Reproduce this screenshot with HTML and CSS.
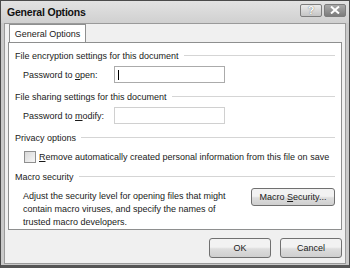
FILE: index.html
```html
<!DOCTYPE html>
<html>

<head>
  <title>General Options</title>
  <link rel="stylesheet" href="styles.css">
</head>

<body>
  <div class="window">
    <div class="titlebar">
      <span class="title">General Options</span>
      <div class="caption-buttons">
        <span class="cap-btn help">?</span>
        <span class="cap-btn close">
          <svg width="10" height="8" viewBox="0 0 10 8">
            <path d="M1 0.5 L9 7.5 M9 0.5 L1 7.5" stroke="#fff" stroke-width="2"/>
          </svg>
        </span>
      </div>
    </div>

    <div class="client">
      <!-- tab strip -->
      <div class="tabs">
        <span class="tab">General Options</span>
      </div>

      <div class="panel">
        <div class="group-title"><span>File encryption settings for this document</span></div>
        <div class="field-row">
          <label>Password to <u>o</u>pen:</label>
          <div class="textbox"><span class="caret"></span></div>
        </div>

        <div class="group-title"><span>File sharing settings for this document</span></div>
        <div class="field-row">
          <label>Password to <u>m</u>odify:</label>
          <div class="textbox disabled"></div>
        </div>

        <div class="group-title"><span>Privacy options</span></div>
        <div class="check-row">
          <span class="checkbox"></span>
          <span><u>R</u>emove automatically created personal information from this file on save</span>
        </div>

        <div class="group-title"><span>Macro security</span></div>
        <div class="macro-row">
          <p>Adjust the security level for opening files that might contain macro viruses, and specify the names of trusted macro developers.</p>
          <span class="button macro-btn"><span>Macro <u>S</u>ecurity...</span></span>
        </div>
      </div>

      <div class="footer">
        <span class="button">OK</span>
        <span class="button">Cancel</span>
      </div>
    </div>
  </div>
</body>
</html>
```

FILE: styles.css
```css
body {
  margin: 0;
  font-family: "Liberation Sans", Arial, sans-serif;
  font-size: 9px;
  letter-spacing: 0;
  color: #1a1a1a;
}

.window {
  width: 350px;
  height: 268px;
  box-sizing: border-box;
  border: 1px solid #4a4a4a;
  border-bottom: 3px solid #555;
  background: #c9c9c9;
  padding: 0 3px 1px 3px;
  display: flex;
  flex-direction: column;
}

.titlebar {
  height: 22px;
  flex-shrink: 0;
  display: flex;
  align-items: center;
  justify-content: space-between;
  background: linear-gradient(#e2e2e2, #d0d0d0);
  margin: 0 -3px;
  padding: 0 3px 0 6px;
}

.title {
  font-weight: bold;
  font-size: 10.5px;
  letter-spacing: -0.2px;
  color: #111;
}

.caption-buttons {
  display: flex;
  gap: 2px;
  margin-top: -4px;
}

.cap-btn {
  height: 13px;
  border: 1px solid #7d7d7d;
  border-radius: 2px;
  display: flex;
  align-items: center;
  justify-content: center;
  box-sizing: border-box;
}

.help {
  width: 22px;
  background: linear-gradient(#ebebeb, #c4c4c4);
  color: #fff;
  font-weight: bold;
  font-size: 11px;
  text-shadow: 0 0 1px #444;
}

.close {
  width: 22px;
  background: linear-gradient(#a9a9a9, #7c7c7c);
}

.client {
  flex: 1;
  background: #f0f0f0;
  border: 1px solid #9a9a9a;
  padding: 0 3px;
  display: flex;
  flex-direction: column;
}

.tabs {
  display: flex;
  padding-left: 1px;
  height: 18px;
}

.tab {
  background: #fff;
  border: 1px solid #8e8f8f;
  border-bottom: none;
  width: 77px;
  box-sizing: border-box;
  text-align: center;
  line-height: 18px;
  position: relative;
  z-index: 1;
}

.panel {
  background: #fff;
  border: 1px solid #8e8f8f;
  height: 188px;
  box-sizing: border-box;
  padding: 6px 6px 0 6px;
}

.group-title {
  display: flex;
  align-items: center;
  gap: 5px;
  height: 13px;
}

.group-title::after {
  content: "";
  flex: 1;
  border-top: 1px solid #d5d5d5;
}

.field-row {
  display: flex;
  align-items: center;
  padding: 4px 0 7px 8px;
}

.field-row label {
  width: 91px;
}

.textbox {
  width: 111px;
  height: 17px;
  box-sizing: border-box;
  border: 1px solid #ababab;
  background: #fff;
  display: flex;
  align-items: center;
  padding-left: 3px;
}

.textbox.disabled {
  border-color: #d0d0d0;
}

.caret {
  width: 1px;
  height: 10px;
  background: #000;
}

.check-row {
  display: flex;
  align-items: center;
  gap: 3px;
  line-height: 12px;
  padding: 7px 0 7px 9px;
}

.checkbox {
  width: 10px;
  height: 10px;
  border: 1px solid #8f8f8f;
  background: linear-gradient(135deg, #d8d8d8, #f6f6f6);
}

.macro-row {
  display: flex;
  justify-content: space-between;
  align-items: flex-start;
  padding-left: 8px;
}

.macro-row p {
  margin: 7px 0 0 0;
  width: 205px;
  line-height: 13px;
}

.button {
  border: 1px solid #707070;
  border-radius: 3px;
  background: linear-gradient(#f2f2f2 45%, #dddddd 55%, #cfcfcf);
  display: flex;
  align-items: center;
  justify-content: center;
  height: 19px;
  box-sizing: border-box;
}

.macro-btn {
  width: 84px;
  height: 18px;
  margin-top: 5px;
}

.footer {
  display: flex;
  justify-content: flex-end;
  gap: 9px;
  padding-top: 8px;
}

.footer .button {
  width: 62px;
  height: 20px;
}
```
